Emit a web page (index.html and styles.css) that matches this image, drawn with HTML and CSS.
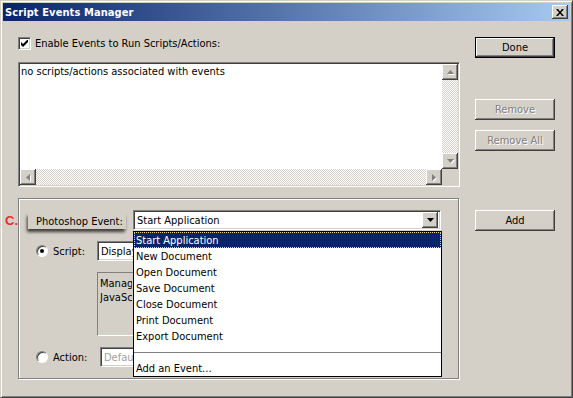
FILE: index.html
```html
<!DOCTYPE html>
<html lang="en">
<head>
    <meta charset="UTF-8">
    <title>Script Events Manager</title>
    <link rel="stylesheet" href="styles.css">
</head>
<body>
    <div class="window">
        <div class="titlebar">
            <span class="title">Script Events Manager</span>
            <span class="close-btn">
                <svg width="8" height="7" viewBox="0 0 8 7"><path d="M0 0h2l2 2.5L6 0h2L5 3.5 8 7H6L4 4.5 2 7H0l3-3.5z" fill="#000"/></svg>
            </span>
        </div>

        <div class="client">
            <div class="main">
                <div class="check-row">
                    <span class="checkbox">
                        <svg width="7" height="7" viewBox="0 0 7 7"><path d="M0 2v3l2 2 5-5V-1L2 4z" fill="#000"/></svg>
                    </span>
                    <span>Enable Events to Run Scripts/Actions:</span>
                </div>

                <!-- event list -->
                <div class="listbox">
                    <div class="list-items">no scripts/actions associated with events</div>
                    <div class="vscroll">
                        <span class="sb-btn"><svg width="7" height="4" viewBox="0 0 7 4"><path d="M3.5 0L7 4H0z" fill="#808080"/></svg></span>
                        <span class="sb-track"></span>
                        <span class="sb-btn"><svg width="7" height="4" viewBox="0 0 7 4"><path d="M0 0h7L3.5 4z" fill="#808080"/></svg></span>
                    </div>
                    <div class="hscroll">
                        <span class="sb-btn"><svg width="4" height="7" viewBox="0 0 4 7"><path d="M0 3.5L4 0v7z" fill="#808080"/></svg></span>
                        <span class="sb-track"></span>
                        <span class="sb-btn"><svg width="4" height="7" viewBox="0 0 4 7"><path d="M0 0l4 3.5L0 7z" fill="#808080"/></svg></span>
                    </div>
                    <div class="sb-corner"></div>
                </div>

                <!-- new event group -->
                <div class="group">
                    <span class="callout">C.</span>

                    <div class="event-row">
                        <span class="event-label">Photoshop Event:</span>
                        <div class="combo event-combo">
                            <span class="combo-text">Start Application</span>
                            <span class="drop-btn"><svg width="7" height="4" viewBox="0 0 7 4"><path d="M0 0h7L3.5 4z" fill="#000"/></svg></span>
                            <ul class="dropdown">
                                <li class="selected">Start Application</li>
                                <li>New Document</li>
                                <li>Open Document</li>
                                <li>Save Document</li>
                                <li>Close Document</li>
                                <li>Print Document</li>
                                <li>Export Document</li>
                                <li class="separator"></li>
                                <li>Add an Event...</li>
                            </ul>
                        </div>
                    </div>

                    <div class="option-row">
                        <span class="radio checked"></span>
                        <span class="opt-label">Script:</span>
                        <div class="combo script-combo">
                            <span class="combo-text clip">Display</span>
                        </div>
                    </div>

                    <div class="desc">
                        <span class="clip">Manage</span>
                        <span class="clip">JavaScript</span>
                    </div>

                    <div class="option-row">
                        <span class="radio"></span>
                        <span class="opt-label wide">Action:</span>
                        <div class="combo action-combo disabled">
                            <span class="combo-text clip">Default</span>
                        </div>
                    </div>
                </div>
            </div>

            <div class="buttons">
                <button class="btn default btn-done">Done</button>
                <button class="btn btn-remove" disabled>Remove</button>
                <button class="btn btn-remove-all" disabled>Remove All</button>
                <button class="btn btn-add">Add</button>
            </div>
        </div>
    </div>
</body>
</html>
```

FILE: styles.css
```css
* {
    box-sizing: border-box;
}

body {
    margin: 0;
    background: #d4d0c8;
    font-family: "DejaVu Sans Condensed", "Liberation Sans", sans-serif;
    font-size: 11px;
    color: #000;
}

/* WINDOW FRAME */
.window {
    width: 573px;
    height: 398px;
    padding: 2px;
    background: #d4d0c8;
    border: 1px solid;
    border-color: #d4d0c8 #404040 #404040 #d4d0c8;
    box-shadow: inset 1px 1px 0 #fff, inset -1px -1px 0 #808080;
}

.titlebar {
    height: 18px;
    display: flex;
    align-items: center;
    justify-content: space-between;
    padding: 0 2px 0 2px;
    background: linear-gradient(to right, #0a246a, #a6caf0);
}

.title {
    color: #fff;
    font-weight: bold;
    letter-spacing: 0.1px;
}

.close-btn {
    width: 16px;
    height: 14px;
    display: flex;
    align-items: center;
    justify-content: center;
    background: #d4d0c8;
    box-shadow: inset -1px -1px 0 #404040, inset 1px 1px 0 #fff, inset -2px -2px 0 #808080;
}

/* CLIENT AREA */
.client {
    display: flex;
    padding-left: 15px;
}

.main {
    width: 442px;
}

.check-row {
    display: flex;
    align-items: center;
    gap: 4px;
    height: 13px;
    margin-top: 16px;
}

.checkbox {
    width: 13px;
    height: 13px;
    display: flex;
    align-items: center;
    justify-content: center;
    background: #fff;
    border: 1px solid;
    border-color: #808080 #fff #fff #808080;
    box-shadow: inset 1px 1px 0 #404040, inset -1px -1px 0 #d4d0c8;
}

/* LISTBOX */
.listbox {
    margin-top: 12px;
    height: 125px;
    display: grid;
    grid-template-columns: 1fr 16px;
    grid-template-rows: 1fr 16px;
    background: #fff;
    border: 1px solid;
    border-color: #808080 #fff #fff #808080;
    box-shadow: inset 1px 1px 0 #404040, inset -1px -1px 0 #d4d0c8;
    padding: 1px;
}

.list-items {
    padding: 1px 1px;
    line-height: 14px;
}

.vscroll {
    display: flex;
    flex-direction: column;
}

.hscroll {
    display: flex;
}

.sb-track {
    flex: 1;
    background: repeating-conic-gradient(#d4d0c8 0 25%, #fff 0 50%) 0 0 / 2px 2px;
}

.sb-btn {
    width: 16px;
    height: 16px;
    display: flex;
    align-items: center;
    justify-content: center;
    background: #d4d0c8;
    box-shadow: inset -1px -1px 0 #404040, inset 1px 1px 0 #fff, inset -2px -2px 0 #808080;
}

.sb-btn svg {
    filter: drop-shadow(1px 1px 0 #fff);
}

.sb-corner {
    background: #d4d0c8;
}

/* GROUP */
.group {
    position: relative;
    margin-top: 11px;
    width: 441px;
    padding: 11px 0 11px 9px;
    border: 1px solid #808080;
    box-shadow: inset 1px 1px 0 #fff, 1px 1px 0 #fff;
}

.callout {
    position: absolute;
    left: -14px;
    top: 15px;
    color: #f0282a;
    font-family: "Liberation Sans", sans-serif;
    font-weight: bold;
    font-size: 13px;
    line-height: 13px;
}

.event-row {
    display: flex;
    align-items: flex-start;
    height: 20px;
}

.event-label {
    margin-top: 3px;
    width: 98px;
    height: 16px;
    line-height: 17px;
    padding-left: 8px;
    background: #d4d0c8;
    box-shadow: -1px 3px 3px rgba(0, 0, 0, 0.7);
}

.combo {
    position: relative;
    height: 20px;
    display: flex;
    align-items: center;
    justify-content: space-between;
    background: #fff;
    border: 1px solid;
    border-color: #808080 #fff #fff #808080;
    box-shadow: inset 1px 1px 0 #404040, inset -1px -1px 0 #d4d0c8;
    padding: 2px 2px 2px 2px;
}

.combo-text {
    padding: 1px 0 0 1px;
    white-space: nowrap;
    overflow: hidden;
}

.clip {
    display: block;
    width: 33px;
    overflow: hidden;
    white-space: nowrap;
}

.event-combo {
    margin-left: 7px;
    width: 308px;
}

.drop-btn {
    width: 16px;
    height: 16px;
    flex: none;
    display: flex;
    align-items: center;
    justify-content: center;
    background: #d4d0c8;
    box-shadow: inset -1px -1px 0 #404040, inset 1px 1px 0 #fff, inset -2px -2px 0 #808080;
}

/* open dropdown of the event combo */
.dropdown {
    position: absolute;
    top: 20px;
    left: -1px;
    width: 309px;
    margin: 0;
    padding: 0;
    list-style: none;
    background: #fff;
    border: 1px solid #000;
    z-index: 10;
}

.dropdown li {
    height: 16px;
    line-height: 15px;
    padding: 1px 0 0 2px;
    white-space: nowrap;
}

.dropdown li.selected {
    background: #0a246a;
    color: #fff;
    outline: 1px dotted #e8d08a;
    outline-offset: -1px;
}

.dropdown li.separator {
    position: relative;
}

.dropdown li.separator::after {
    content: "";
    position: absolute;
    left: 0;
    right: 0;
    top: 8px;
    height: 1px;
    background: #808080;
}

/* OPTION ROWS */
.option-row {
    display: flex;
    align-items: center;
    height: 20px;
    margin-top: 11px;
}

.radio {
    margin-left: 8px;
    width: 12px;
    height: 12px;
    flex: none;
    border-radius: 50%;
    background: #fff;
    border: 1px solid;
    border-color: #808080 #fff #fff #808080;
    box-shadow: inset 1px 1px 0 #404040;
    position: relative;
}

.radio.checked::after {
    content: "";
    position: absolute;
    left: 3px;
    top: 3px;
    width: 4px;
    height: 4px;
    border-radius: 50%;
    background: #000;
}

.opt-label {
    margin-left: 5px;
    width: 44px;
    flex: none;
}

.opt-label.wide {
    width: 47px;
}

.script-combo {
    width: 344px;
}

.action-combo {
    width: 341px;
}

.combo.disabled {
    color: #a0a0a0;
}

.desc {
    margin: 11px 0 0 69px;
    width: 344px;
    height: 64px;
    padding: 4px 2px;
    line-height: 14px;
    border: 1px solid;
    border-color: #808080 #fff #fff #808080;
}

.desc .clip {
    width: 32px;
}

/* BUTTONS */
.buttons {
    display: flex;
    flex-direction: column;
    margin-left: 15px;
    width: 80px;
}

.btn {
    width: 80px;
    height: 21px;
    padding: 0;
    font-family: inherit;
    font-size: 11px;
    color: #000;
    background: #d4d0c8;
    border: none;
    box-shadow: inset -1px -1px 0 #404040, inset 1px 1px 0 #fff, inset -2px -2px 0 #808080;
}

.btn.default {
    border: 1px solid #000;
}

.btn:disabled {
    color: #808080;
    text-shadow: 1px 1px 0 #fff;
}

.btn-done {
    margin-top: 16px;
}

.btn-remove {
    margin-top: 41px;
}

.btn-remove-all {
    margin-top: 10px;
}

.btn-add {
    margin-top: 59px;
}
```
